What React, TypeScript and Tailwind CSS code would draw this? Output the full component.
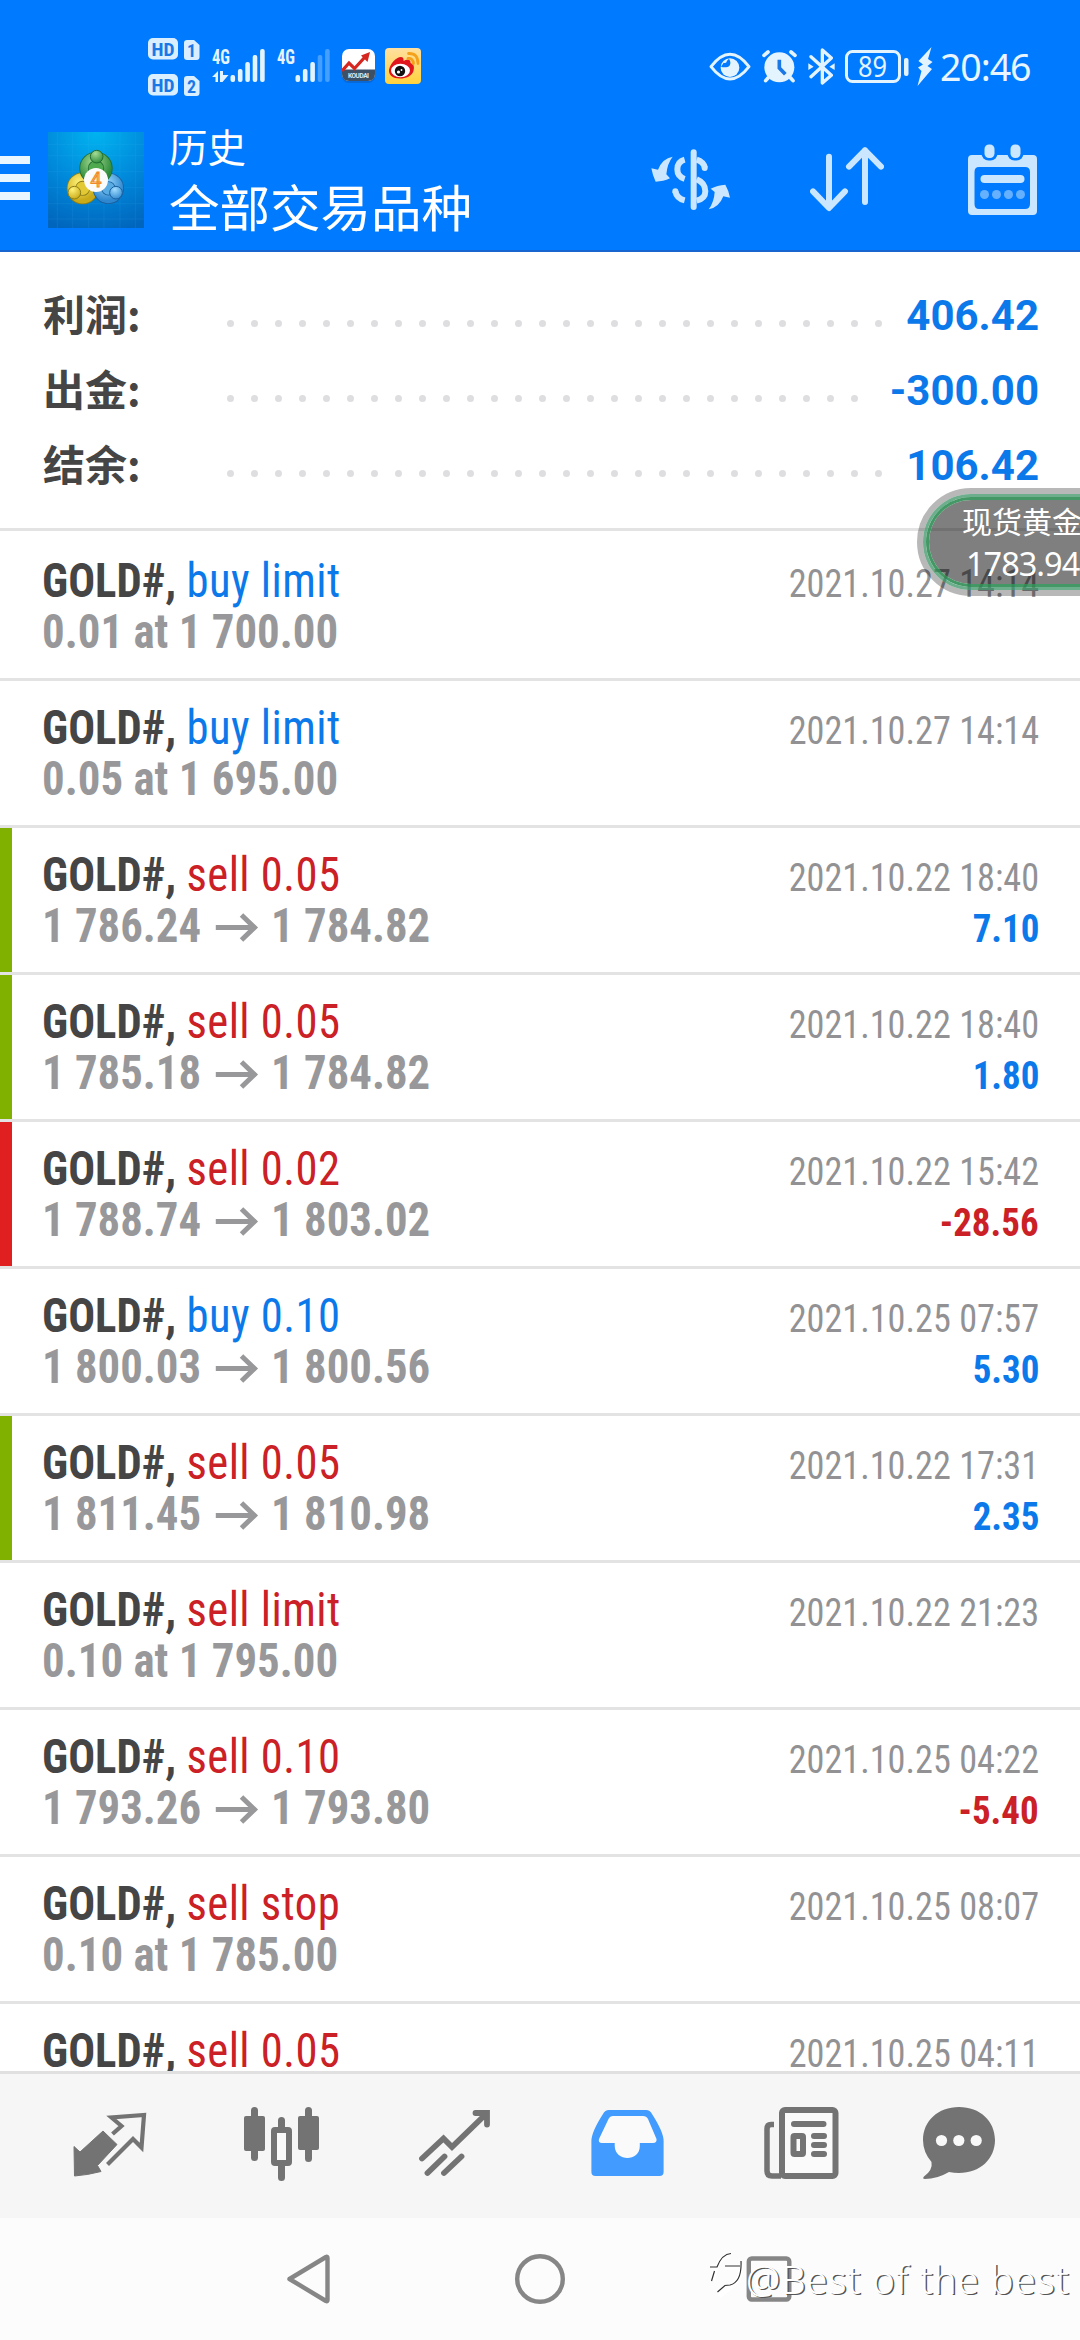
import type { ReactNode } from "react";

type Tone = "blue" | "red";

interface Deal {
  side: string;
  tone: Tone;
  time: string;
  order?: string;
  open?: string;
  close?: string;
  profit?: string;
  bar?: "tp" | "sl";
}

const summary = [
  { label: "利润:", value: "406.42", dots: 28 },
  { label: "出金:", value: "-300.00", dots: 27 },
  { label: "结余:", value: "106.42", dots: 28 },
];

const deals: Deal[] = [
  { side: "buy limit", tone: "blue", time: "2021.10.27 14:14", order: "0.01 at 1 700.00" },
  { side: "buy limit", tone: "blue", time: "2021.10.27 14:14", order: "0.05 at 1 695.00" },
  { side: "sell 0.05", tone: "red", time: "2021.10.22 18:40", open: "1 786.24", close: "1 784.82", profit: "7.10", bar: "tp" },
  { side: "sell 0.05", tone: "red", time: "2021.10.22 18:40", open: "1 785.18", close: "1 784.82", profit: "1.80", bar: "tp" },
  { side: "sell 0.02", tone: "red", time: "2021.10.22 15:42", open: "1 788.74", close: "1 803.02", profit: "-28.56", bar: "sl" },
  { side: "buy 0.10", tone: "blue", time: "2021.10.25 07:57", open: "1 800.03", close: "1 800.56", profit: "5.30" },
  { side: "sell 0.05", tone: "red", time: "2021.10.22 17:31", open: "1 811.45", close: "1 810.98", profit: "2.35", bar: "tp" },
  { side: "sell limit", tone: "red", time: "2021.10.22 21:23", order: "0.10 at 1 795.00" },
  { side: "sell 0.10", tone: "red", time: "2021.10.25 04:22", open: "1 793.26", close: "1 793.80", profit: "-5.40" },
  { side: "sell stop", tone: "red", time: "2021.10.25 08:07", order: "0.10 at 1 785.00" },
  { side: "sell 0.05", tone: "red", time: "2021.10.25 04:11" },
];

const toneClass: Record<Tone, string> = {
  blue: "text-[#0c79ea]",
  red: "text-[#cb2026]",
};

const barClass = {
  tp: "bg-[#80b000]",
  sl: "bg-[#e02020]",
};

/* Status bar */

function SimBadges() {
  return (
    <svg width="52" height="58" viewBox="0 0 52 58" className="font-['Roboto_Condensed'] font-bold">
      {[0, 36].map((y, i) => (
        <g key={y}>
          <rect x="0" y={y} width="30" height="21.5" rx="5" fill="#d9efff" />
          <text x="3.5" y={y + 17.5} fontSize="19" textLength="23" lengthAdjust="spacingAndGlyphs" fill="#1a78e6">
            HD
          </text>
          <path d={`M39 ${y + 2} h7 l5.500 5 v12 q0 3 -3 3 h-9.500 q-3 0 -3 -3 v-14 q0 -3 3 -3z`} fill="#d9efff" />
          <text x="39" y={y + 19} fontSize="18" fill="#1a78e6">
            {i + 1}
          </text>
        </g>
      ))}
    </svg>
  );
}

function Signal({ level, arrows }: { level: number; arrows?: boolean }) {
  const tops = [26, 20, 13, 6, 0];
  return (
    <svg width="53" height="34" viewBox="0 0 53 34" className="overflow-visible font-['Roboto_Condensed'] font-bold">
      <text x="0" y="15" fontSize="20" textLength="18" lengthAdjust="spacingAndGlyphs" fill="#e4f4ff">
        4G
      </text>
      {arrows && <path d="M0 28 L6 22 V33 H3.500 V28Z M8 22 H11 V26 H16.500 L10.500 33 H8Z" fill="#e4f4ff" />}
      {tops.map((top, i) => (
        <rect
          key={top}
          x={18.5 + i * 7.4}
          y={top}
          width="4.6"
          height={33 - top}
          rx="2"
          fill="#e4f4ff"
          opacity={i < level ? 1 : 0.3}
        />
      ))}
    </svg>
  );
}

function KoudaiIcon() {
  return (
    <svg width="33" height="34" viewBox="0 0 33 34">
      <rect y="1" width="33" height="33" rx="7" fill="#0a5cc0" opacity="0.6" />
      <rect width="33" height="32" rx="7" fill="#fff" />
      <path d="M0 20.500 H33 V25 Q33 32 26 32 H7 Q0 32 0 25Z" fill="#3c5168" />
      <path d="M0 22 L7 14 L12.500 19.500 L23 8" stroke="#d5261f" strokeWidth="3.2" fill="none" />
      <path d="M19 6.500 L28 3 L25.500 13Z" fill="#d5261f" />
      <text x="6" y="29" fontSize="6.500" textLength="21" className="font-['Roboto'] font-bold" fill="#dfe8f0">
        KOUDAI
      </text>
    </svg>
  );
}

function WeiboIcon() {
  return (
    <svg width="36" height="36" viewBox="0 0 36 36">
      <defs>
        <linearGradient id="weibo" x1="0" y1="0" x2="0" y2="1">
          <stop offset="0" stopColor="#ffe0a0" />
          <stop offset="1" stopColor="#ffd23c" />
        </linearGradient>
      </defs>
      <rect width="36" height="36" rx="4" fill="url(#weibo)" />
      <path d="M4 22 C5 16 11 9 16 9 C19 9 18.500 12 18.500 13 C22 11 26 11 25.500 15 C30 17 29 20 28.500 23 C27 28 21 30.500 15 30.500 C8 30.500 3.500 27 4 22Z" fill="#e0161c" />
      <ellipse cx="15.500" cy="22.500" rx="9.500" ry="6.700" fill="#fff" />
      <circle cx="15" cy="23" r="5.200" fill="#111" />
      <circle cx="13.500" cy="24" r="1.600" fill="#fff" />
      <circle cx="16.500" cy="22" r="0.900" fill="#fff" />
      <path d="M23 10.500 Q28 10 28.500 15.500 M23.500 5.500 Q33 5 33 15.500" stroke="#f5a11c" strokeWidth="2.800" fill="none" strokeLinecap="round" />
    </svg>
  );
}

function EyeIcon() {
  return (
    <svg width="42" height="30" viewBox="0 0 126 90">
      <path d="M6 44 Q63 -30 120 44 Q63 118 6 44Z" fill="none" stroke="#e4f4ff" strokeWidth="9" strokeLinejoin="round" />
      <circle cx="63" cy="47" r="28" fill="#e4f4ff" />
      <path d="M44 32 Q52 36 54 26 L60 20 Q70 36 58 44 Q46 48 36 44Z" fill="#007aff" />
    </svg>
  );
}

function AlarmIcon() {
  return (
    <svg width="35" height="33" viewBox="0 0 105 99" strokeLinecap="round" fill="none">
      <circle cx="52" cy="52" r="45" fill="#e4f4ff" />
      <path d="M6 16 L18 6 M87 6 L99 16 M18 84 L11 92 M86 84 L93 92" stroke="#e4f4ff" strokeWidth="11" />
      <path d="M52 29 V54 L70 73" stroke="#1a78e6" strokeWidth="11" strokeLinecap="butt" />
    </svg>
  );
}

function BluetoothIcon() {
  return (
    <svg width="27" height="37" viewBox="0 0 81 111">
      <path d="M9 26 L70 82 L43 105 V6 L70 30 L9 86" fill="none" stroke="#e4f4ff" strokeWidth="10" strokeLinecap="round" strokeLinejoin="round" />
      <path d="M1 46 L17 56 L1 66Z M80 46 L64 56 L80 66Z" fill="#e4f4ff" />
    </svg>
  );
}

function Battery() {
  return (
    <svg width="64" height="33" viewBox="0 0 64 33" className="overflow-visible">
      <rect x="1.500" y="1.500" width="53" height="30" rx="6" fill="none" stroke="#e4f4ff" strokeWidth="3" />
      <rect x="59" y="8" width="4.500" height="18" rx="2" fill="#e4f4ff" />
      <text x="13" y="26.500" fontSize="28.500" textLength="29" lengthAdjust="spacingAndGlyphs" className="font-['Noto_Sans']" fill="#e4f4ff">
        89
      </text>
    </svg>
  );
}

function StatusBar() {
  return (
    <div className="flex h-[100px] items-center pr-[49px] pl-[148px] pt-[33px]">
      <SimBadges />
      <div className="ml-3 -mt-0.5 flex items-center">
        <Signal level={5} arrows />
        <div className="w-3" />
        <Signal level={3} />
        <div className="w-3" />
        <KoudaiIcon />
        <div className="w-2.5" />
        <WeiboIcon />
      </div>
      <div className="ml-auto flex items-center">
        <EyeIcon />
        <div className="w-[11px]" />
        <AlarmIcon />
        <div className="w-[11px]" />
        <BluetoothIcon />
        <div className="w-[10px]" />
        <Battery />
        <svg width="17" height="40" viewBox="0 0 17 40" className="ml-[8px]">
          <path d="M14.500 0 L1.500 14 L6 17.500 L1 20.500 L4.500 24 L0.500 39 L15 22 L10.500 19 L15.500 15 L11 12Z" fill="#e4f4ff" />
        </svg>
        <span className="ml-1.5 w-[91px] whitespace-nowrap font-['Noto_Sans'] text-[37.500px] leading-none tracking-[-1.100px] text-[#eaf6ff]">20:46</span>
      </div>
    </div>
  );
}

/* App bar */

function AppLogo() {
  return (
    <svg width="96" height="96" viewBox="24 21 288 288" className="ml-[18px]">
      <defs>
        <radialGradient id="logoBg" cx="0.500" cy="0" r="1.050">
          <stop offset="0" stopColor="#00b4f0" />
          <stop offset="0.550" stopColor="#0088da" />
          <stop offset="1" stopColor="#0066bd" />
        </radialGradient>
        <radialGradient id="green" cx="0.400" cy="0.250" r="0.800">
          <stop offset="0" stopColor="#a5dc96" />
          <stop offset="1" stopColor="#2c8a38" />
        </radialGradient>
        <radialGradient id="yellow" cx="0.350" cy="0.250" r="0.800">
          <stop offset="0" stopColor="#fff27a" />
          <stop offset="1" stopColor="#c9aa18" />
        </radialGradient>
        <radialGradient id="blue" cx="0.400" cy="0.250" r="0.800">
          <stop offset="0" stopColor="#9fdcff" />
          <stop offset="1" stopColor="#2f88cf" />
        </radialGradient>
      </defs>
      <rect x="24" y="21" width="288" height="288" fill="url(#logoBg)" />
      <path d="M52 21V309 M98 21V309 M146 21V309 M192 21V309 M240 21V309 M286 21V309 M24 58H312 M24 92H312 M24 140H312 M24 188H312 M24 236H312 M24 282H312" stroke="#4fc0ff" strokeWidth="2" opacity="0.160" />
      <g strokeWidth="3">
        <circle cx="128" cy="190" r="34" fill="#e3c934" stroke="#8a7d18" strokeWidth="28" />
        <circle cx="128" cy="190" r="34" fill="none" stroke="url(#yellow)" strokeWidth="23" />
        <circle cx="205" cy="190" r="33" fill="#59abe4" stroke="#1a5f9f" strokeWidth="28" />
        <circle cx="205" cy="190" r="33" fill="none" stroke="url(#blue)" strokeWidth="23" />
        <circle cx="168" cy="130" r="36" fill="#4fa94f" stroke="#226d33" strokeWidth="28" />
        <circle cx="168" cy="130" r="36" fill="none" stroke="url(#green)" strokeWidth="23" />
        <circle cx="170" cy="95" r="19" fill="url(#green)" stroke="#226d33" />
        <circle cx="103" cy="203" r="19" fill="url(#yellow)" stroke="#8a7d18" />
        <circle cx="228" cy="203" r="19" fill="url(#blue)" stroke="#1a5f9f" />
      </g>
      <circle cx="168" cy="165" r="36" fill="#fbfbfb" />
      <text x="168" y="186" fontSize="58" textAnchor="middle" className="font-['Roboto']" fill="#fff3df" stroke="#f08a2c" strokeWidth="3.500">
        4
      </text>
    </svg>
  );
}

function CurrencyIcon() {
  return (
    <svg width="79" height="61" viewBox="31 322 237 183" fill="none" stroke="#cbe6ff" strokeWidth="18">
      <path d="M159 332 V496" strokeLinecap="round" />
      <path d="M132 354 Q110 360 110 383 Q110 405 132 412 M168 354 Q188 360 193 379 M168 413 Q194 424 194 449 Q194 471 168 477" />
      <path d="M104 449 Q108 470 132 476" />
      <circle cx="104" cy="449" r="9" fill="#cbe6ff" stroke="none" />
      <circle cx="192" cy="379" r="9" fill="#cbe6ff" stroke="none" />
      <path
        d="M96 345 Q65 350 52 384 L32 380 Q36 402 45 420 Q68 420 88 410 L77 398 Q80 365 96 345Z M204 503 Q235 498 248 464 L268 468 Q264 446 254 429 Q230 430 210 441 L222 451 Q220 482 204 503Z"
        fill="#cbe6ff"
        stroke="none"
      />
    </svg>
  );
}

function SortIcon() {
  return (
    <svg width="74" height="65" viewBox="507 322 222 195" fill="none" stroke="#cbe6ff" strokeWidth="18" strokeLinecap="round" strokeLinejoin="round">
      <path d="M564 351 V504 M516 455 L564 505 L612 455 M672 332 V487 M624 381 L672 332 L720 381" />
    </svg>
  );
}

function CalendarIcon() {
  return (
    <svg width="69" height="71" viewBox="0 0 69 71">
      <path
        fillRule="evenodd"
        d="M4 11 H65 Q69 11 69 15 V67 Q69 71 65 71 H4 Q0 71 0 67 V15 Q0 11 4 11Z M11 23 Q6.500 23 6.500 28 V60 Q6.500 65 11 65 H57 Q62 65 62 60 V28 Q62 23 57 23Z"
        fill="#cbe6ff"
      />
      <rect x="13.500" y="-4" width="16" height="20.500" rx="7" fill="#007aff" />
      <rect x="39.500" y="-4" width="16" height="20.500" rx="7" fill="#007aff" />
      <rect x="16.500" y="0.500" width="10" height="13.500" rx="4.500" fill="#cbe6ff" />
      <rect x="42.500" y="0.500" width="10" height="13.500" rx="4.500" fill="#cbe6ff" />
      <rect x="12.500" y="31" width="44" height="8" rx="4" fill="#cbe6ff" />
      {[16.5, 28.5, 40.5, 52.5].map((x) => (
        <circle key={x} cx={x} cy="50.500" r="4.500" fill="#66b1ff" />
      ))}
    </svg>
  );
}

function AppBar() {
  return (
    <div className="flex h-[150px] items-center pr-[43px]">
      <div className="mt-1.5 flex w-[30px] flex-col gap-[10px]">
        <div className="h-2 bg-[#eaf6ff]" />
        <div className="h-2 bg-[#eaf6ff]" />
        <div className="h-2 bg-[#eaf6ff]" />
      </div>
      <div className="mt-[10px]">
        <AppLogo />
      </div>
      <div className="ml-[25px] flex flex-col pt-[9px] whitespace-nowrap font-['Noto_Sans_CJK_SC',sans-serif] text-white">
        <span className="text-[38.500px] leading-[50px]">历史</span>
        <span className="text-[50.500px] leading-[70px]">全部交易品种</span>
      </div>
      <div className="mt-[8px] ml-auto flex items-center">
        <CurrencyIcon />
        <div className="w-[80px]" />
        <SortIcon />
        <div className="w-[84px]" />
        <CalendarIcon />
      </div>
    </div>
  );
}

/* History */

function SummaryRow({ label, value, dots }: { label: string; value: string; dots: number }) {
  return (
    <div className="flex h-[75px] items-center">
      <span className="w-[184px] pb-1.5 font-['Noto_Sans_CJK_SC',sans-serif] text-[42px] font-bold leading-none text-[#454545]">{label}</span>
      <div className="mt-4 flex gap-[17px]">
        {Array.from({ length: dots }, (_, i) => (
          <i key={i} className="size-[7px] rounded-full bg-[#dedee0]" />
        ))}
      </div>
      <span className="ml-auto font-['Roboto'] text-[42px] font-bold leading-none text-[#0c79ea]">{value}</span>
    </div>
  );
}

function DealRow({ deal }: { deal: Deal }) {
  return (
    <div className="flex h-[147px] shrink-0 flex-col">
      <div className="flex h-36 shrink-0">
        <div className={`w-3 ${deal.bar ? barClass[deal.bar] : ""}`} />
        <div className="flex flex-1 flex-col pt-[21px] pr-[41px] pl-[30px] font-['Roboto_Condensed'] text-[48px] leading-[51px] whitespace-pre">
          <div className="flex h-[51px] items-baseline justify-between">
            <span className="origin-left scale-x-[0.93]">
              <b className="text-[#454545]">GOLD#, </b>
              <span className={`tracking-[0.5px] ${toneClass[deal.tone]}`}>{deal.side}</span>
            </span>
            <span className="origin-right scale-x-[0.917] text-[39.500px] text-[#929295]">{deal.time}</span>
          </div>
          <div className="flex h-[51px] items-baseline justify-between font-bold text-[#98989a]">
            {deal.order && <span className="origin-left scale-x-[0.935]">{deal.order}</span>}
            {deal.open && (
              <span className="flex origin-left scale-x-[0.933] items-baseline">
                {deal.open}
                <svg width="46" height="29" viewBox="0 0 43 29" preserveAspectRatio="none" className="mr-3.5 ml-[15px]" fill="none" stroke="#98989a" strokeWidth="5">
                  <path d="M0 14.500 H39 M26 2 L39 14.500 L26 27" />
                </svg>
                {deal.close}
              </span>
            )}
            {deal.profit && (
              <span className={`origin-right scale-x-[0.935] text-[39.500px] ${deal.profit.startsWith("-") ? toneClass.red : toneClass.blue}`}>
                {deal.profit}
              </span>
            )}
          </div>
        </div>
      </div>
      <div className="h-[3px] shrink-0 bg-[#e3e3e3]" />
    </div>
  );
}

function GoldWidget() {
  return (
    <div className="absolute top-[488px] left-[917px] h-[108px] w-[240px] rounded-full border-[6px] border-black/28 bg-clip-padding">
      <div className="h-full rounded-full border-[3px] border-[#2f8d5d]/70 bg-clip-padding">
        <div className="h-full rounded-full border-[3px] border-[#23864a]/85 bg-black/50 bg-clip-padding pl-[33px] whitespace-nowrap text-white">
          <p className="font-['Noto_Sans_CJK_SC',sans-serif] text-[30px] leading-[40px]">现货黄金</p>
          <p className="pt-[1px] pl-[4px] font-['Noto_Sans'] text-[32.500px] leading-[46px] tracking-[-1px]">1783.94</p>
        </div>
      </div>
    </div>
  );
}

/* Bottom navigation */

function TabIcon({ x, w, className, children }: { x: number; w: number; className: string; children: ReactNode }) {
  return (
    <svg width={w} height="76" viewBox={`${x} 2106 ${w} 76`} className={className}>
      {children}
    </svg>
  );
}

function TabBar() {
  return (
    <div className="flex h-[147px] shrink-0 items-start border-t-[3px] border-[#e0e0e0] bg-[#f6f6f6] pt-8 text-[#737373]">
      <TabIcon x={73} w={75} className="ml-[73px]">
        <path d="M103 2131 L117 2144.500 L97.500 2165.500 L101 2171.500 Q88 2175 74.500 2176 L74 2146.500 L80 2152Z" fill="currentColor" stroke="currentColor" strokeLinejoin="round" />
        <path d="M112.500 2134 L121.500 2126 L111.500 2117.500 L144 2115 L141.500 2147.500 L133 2139 L107.500 2164.500" fill="none" stroke="currentColor" strokeWidth="4.200" />
      </TabIcon>
      <TabIcon x={244} w={76} className="ml-[96px]">
        <g stroke="currentColor" strokeWidth="7" strokeLinecap="round">
          <path d="M254.500 2110.500 V2157.500 M308.500 2110.500 V2158.500 M281.500 2120.500 V2130 M281.500 2166 V2177.500" />
        </g>
        <rect x="244" y="2116" width="21" height="35" rx="2" fill="currentColor" />
        <rect x="298" y="2116" width="21" height="34" rx="2" fill="currentColor" />
        <rect x="274" y="2130" width="15" height="33" rx="1" fill="#f9f9f9" stroke="currentColor" strokeWidth="6" />
      </TabIcon>
      <TabIcon x={417} w={74} className="ml-[98px]">
        <path
          d="M421 2158.500 L442.500 2138.500 L451 2147 L485 2114 M474.500 2113 H486 V2124.500 M426.500 2173 L443.500 2156.500 M443 2173 L460.500 2156.500"
          fill="none"
          stroke="currentColor"
          strokeWidth="5.800"
          strokeLinecap="round"
        />
      </TabIcon>
      <TabIcon x={590} w={74} className="ml-[99px] text-[#429bff]">
        <path
          d="M608 2110 H645 Q649 2110 651 2114 Q662.600 2132 662.600 2141 V2172 Q662.600 2176 658.500 2176 H594.500 Q590.400 2176 590.400 2172 V2141 Q590.400 2132 602 2114 Q604 2110 608 2110Z"
          fill="currentColor"
        />
        <path d="M612 2116 H642 Q645.500 2116 647 2119 L655.500 2139 Q656 2143 652 2143 H638.800 V2146 C639 2162 614 2162 613.700 2146 V2143 H601 Q597 2143 598 2139 L607.500 2119 Q609 2116 612 2116Z" fill="#fafafa" />
      </TabIcon>
      <TabIcon x={762} w={76} className="ml-[98px]">
        <g fill="none" stroke="currentColor" strokeWidth="6">
          <path d="M773 2124.500 H770 Q766 2124.500 766 2129 V2171 Q766 2176 771 2176 H780" strokeWidth="5.500" />
          <rect x="781" y="2110" width="53.500" height="66" rx="3" fill="#fafafa" />
          <path d="M793 2124 H822.500 M813 2136 H823 M813 2145 H823 M813 2154 H823" strokeLinecap="round" />
          <rect x="792.500" y="2136" width="9.500" height="18" rx="1" />
        </g>
      </TabIcon>
      <TabIcon x={921} w={74} className="ml-[83px]">
        <path
          d="M958 2107 C979 2107 994 2121 994 2140 C994 2159 979 2173 958 2173 Q953 2173 948 2172 Q936 2179 924 2179 Q921 2179 923 2176.500 Q932 2170 930.500 2162 Q922 2152 922 2140 C922 2121 937 2107 958 2107Z"
          fill="currentColor"
        />
        <circle cx="940.500" cy="2140.500" r="5.600" fill="#f9f9f9" />
        <circle cx="957.800" cy="2140.500" r="5.600" fill="#f9f9f9" />
        <circle cx="975.200" cy="2140.500" r="5.600" fill="#f9f9f9" />
      </TabIcon>
    </div>
  );
}

function SystemNav() {
  return (
    <div className="relative flex h-[122px] shrink-0 items-center justify-center bg-[#fcfcfc]">
      <svg width="506" height="54" viewBox="287 2252 506 54" fill="none" stroke="#868686" strokeWidth="4.400" strokeLinejoin="round">
        <path d="M289.500 2279 L326 2257 Q327.500 2256 327.500 2258 V2300 Q327.500 2302 326 2301Z" />
        <circle cx="540" cy="2279" r="22.800" />
        <rect x="748.800" y="2258.500" width="40.500" height="41" rx="3" />
      </svg>
      <div className="absolute top-[16px] left-[708px] flex items-center text-white">
        <svg width="38" height="90" viewBox="0 0 38 90" fill="none">
          <path d="M3 33 L9 32 Q13 22 22 22 M8 33 L5 46 M17 33 H33 Q33 46 24 52 L11 62" stroke="#fff" strokeWidth="5" />
          <path d="M2 33 H9 Q14 20 23 19.500 M6.500 37 L3.500 47 M17 32 H32 M33 27 Q34 48 22 51 L17 51.500 L9.500 58" stroke="#333" strokeWidth="1.200" />
        </svg>
        <span className="whitespace-nowrap font-['Noto_Sans'] text-[38.500px] font-light leading-[90px] tracking-[0.900px] [text-shadow:1.500px_1px_0_#555]">@Best of the best</span>
      </div>
    </div>
  );
}

export default function App() {
  return (
    <div className="relative flex h-[2340px] w-[1080px] flex-col overflow-hidden bg-white">
      <header className="h-[252px] shrink-0 border-b-2 border-[#1a66d0] bg-[#007aff]">
        <StatusBar />
        <AppBar />
      </header>
      <section className="h-[279px] shrink-0 border-b-[3px] border-[#e3e3e3] pt-[26px] pr-[41px] pl-[43px]">
        {summary.map((row) => (
          <SummaryRow key={row.label} {...row} />
        ))}
      </section>
      <main className="flex min-h-0 flex-1 flex-col overflow-hidden pt-[3px]">
        {deals.map((deal, i) => (
          <DealRow key={i} deal={deal} />
        ))}
      </main>
      <TabBar />
      <SystemNav />
      <GoldWidget />
    </div>
  );
}
